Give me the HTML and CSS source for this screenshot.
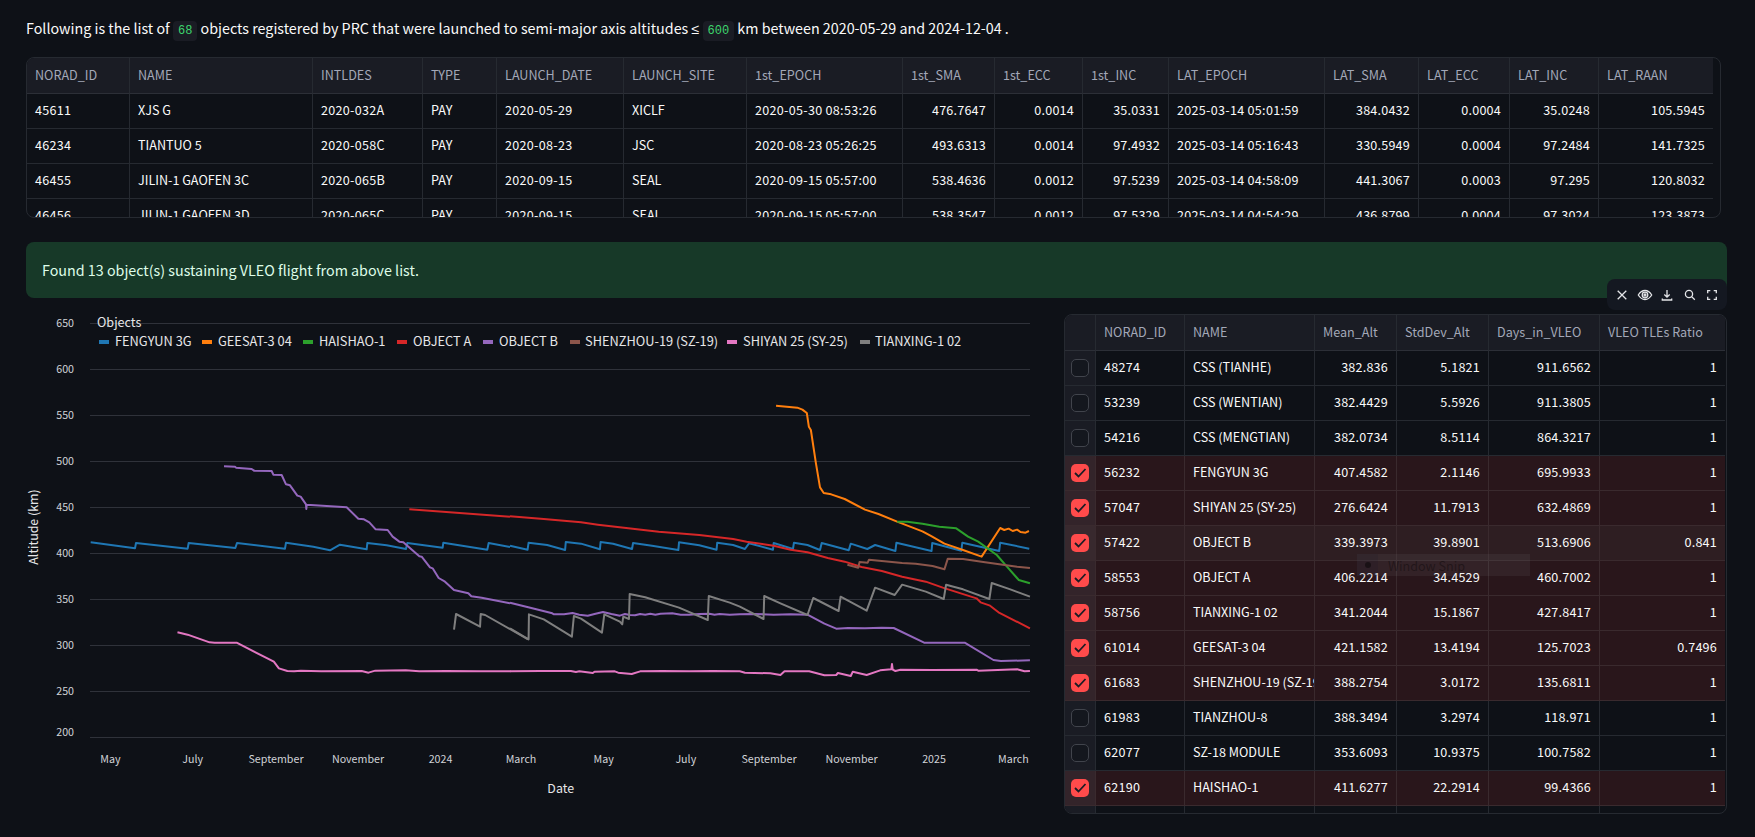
FILE: index.html
```html
<!DOCTYPE html>
<html lang="en">
<head>
<meta charset="utf-8">
<title>VLEO objects</title>
<link rel="stylesheet" href="styles.css">
</head>
<body>
<main class="page">
  <p class="intro">Following is the list of <code>68</code> objects registered by PRC that were launched to semi-major axis altitudes <span class="sym">≤</span> <code>600</code> km between 2020-05-29 and 2024-12-04 .</p>

  <div class="grid grid-top">
    <table class="dt dt-top">
      <colgroup>
        <col class="w103"><col class="w183"><col class="w110"><col class="w74"><col class="w127"><col class="w123"><col class="w156"><col class="w92"><col class="w88"><col class="w86"><col class="w156"><col class="w94"><col class="w91"><col class="w89"><col class="w114">
      </colgroup>
      <thead><tr><th>NORAD_ID</th><th>NAME</th><th>INTLDES</th><th>TYPE</th><th>LAUNCH_DATE</th><th>LAUNCH_SITE</th><th>1st_EPOCH</th><th>1st_SMA</th><th>1st_ECC</th><th>1st_INC</th><th>LAT_EPOCH</th><th>LAT_SMA</th><th>LAT_ECC</th><th>LAT_INC</th><th>LAT_RAAN</th></tr></thead>
      <tbody>
        <tr><td class="d">45611</td><td>XJS G</td><td class="d">2020-032A</td><td>PAY</td><td class="d">2020-05-29</td><td>XICLF</td><td class="d">2020-05-30 08:53:26</td><td class="n">476.7647</td><td class="n">0.0014</td><td class="n">35.0331</td><td class="d">2025-03-14 05:01:59</td><td class="n">384.0432</td><td class="n">0.0004</td><td class="n">35.0248</td><td class="n">105.5945</td></tr>
        <tr><td class="d">46234</td><td>TIANTUO 5</td><td class="d">2020-058C</td><td>PAY</td><td class="d">2020-08-23</td><td>JSC</td><td class="d">2020-08-23 05:26:25</td><td class="n">493.6313</td><td class="n">0.0014</td><td class="n">97.4932</td><td class="d">2025-03-14 05:16:43</td><td class="n">330.5949</td><td class="n">0.0004</td><td class="n">97.2484</td><td class="n">141.7325</td></tr>
        <tr><td class="d">46455</td><td>JILIN-1 GAOFEN 3C</td><td class="d">2020-065B</td><td>PAY</td><td class="d">2020-09-15</td><td>SEAL</td><td class="d">2020-09-15 05:57:00</td><td class="n">538.4636</td><td class="n">0.0012</td><td class="n">97.5239</td><td class="d">2025-03-14 04:58:09</td><td class="n">441.3067</td><td class="n">0.0003</td><td class="n">97.295</td><td class="n">120.8032</td></tr>
        <tr><td class="d">46456</td><td>JILIN-1 GAOFEN 3D</td><td class="d">2020-065C</td><td>PAY</td><td class="d">2020-09-15</td><td>SEAL</td><td class="d">2020-09-15 05:57:00</td><td class="n">538.3547</td><td class="n">0.0012</td><td class="n">97.5329</td><td class="d">2025-03-14 04:54:29</td><td class="n">436.8799</td><td class="n">0.0004</td><td class="n">97.3024</td><td class="n">123.3873</td></tr>
      </tbody>
    </table>
  </div>

  <div class="alert">Found 13 object(s) sustaining VLEO flight from above list.</div>

  <section class="split">
    <svg class="chart" viewBox="26 298 1010 530" width="1010" height="530" role="img" aria-label="Altitude by date">
      <g class="gridlines">
        <line x1="90" x2="1030" y1="323.5" y2="323.5"/>
        <line x1="90" x2="1030" y1="369.5" y2="369.5"/>
        <line x1="90" x2="1030" y1="415.5" y2="415.5"/>
        <line x1="90" x2="1030" y1="461.5" y2="461.5"/>
        <line x1="90" x2="1030" y1="507.5" y2="507.5"/>
        <line x1="90" x2="1030" y1="553.5" y2="553.5"/>
        <line x1="90" x2="1030" y1="599.5" y2="599.5"/>
        <line x1="90" x2="1030" y1="645.5" y2="645.5"/>
        <line x1="90" x2="1030" y1="691.5" y2="691.5"/>
        <line x1="90" x2="1030" y1="737.5" y2="737.5"/>
      </g>
      <g class="ticks ticks-y">
        <text x="74" y="327">650</text><text x="74" y="373">600</text><text x="74" y="419">550</text><text x="74" y="465">500</text><text x="74" y="511">450</text><text x="74" y="557">400</text><text x="74" y="603">350</text><text x="74" y="649">300</text><text x="74" y="695">250</text><text x="74" y="736">200</text>
      </g>
      <g class="ticks ticks-x">
        <text x="110.5" y="763">May</text><text x="192.7" y="763">July</text><text x="276" y="763">September</text><text x="358" y="763">November</text><text x="440.5" y="763">2024</text><text x="521" y="763">March</text><text x="603.6" y="763">May</text><text x="685.8" y="763">July</text><text x="769" y="763">September</text><text x="851.5" y="763">November</text><text x="934" y="763">2025</text><text x="1013.4" y="763">March</text>
      </g>
      <text class="axis-title" x="560.7" y="792.5">Date</text>
      <text class="axis-title" transform="translate(38 527) rotate(-90)">Altitude (km)</text>

      <!-- series traced from the left part of the plot -->
      <g transform="translate(0 300) scale(.33333)">
        <polyline class="s blue" points="272,727 405,745 408,729 563,746 566,729 706,744 711,729 855,746 858,728 940,740 990,751 1020,734 1100,748 1102,729 1160,736 1218,747 1222,729 1328,743 1330,728 1462,749 1466,729 1530,741"/>
        <polyline class="s purple" points="672,499 705,500 708,503 755,507 762,512 815,513 820,524 845,525 858,553 870,556 892,587 902,590 918,613 919,627 920,614 1040,622 1075,656 1092,658 1108,667 1127,688 1163,690 1178,710 1198,725 1210,727 1258,769 1265,770 1290,802 1298,805 1316,834 1335,845 1362,870 1405,880 1414,889 1445,893 1530,910"/>
        <polyline class="s red" points="1228,628 1530,650"/>
      </g>
      <g transform="translate(0 600) scale(.33806 .33333)">
        <polyline class="s gray" points="1343,89 1349,42 1420,80 1422,42 1435,45 1562,118"/>
        <polyline class="s pink" points="525,97 555,104 620,127 635,128 700,128 810,185 825,205 850,213 870,214 890,212 950,214 1070,213 1090,218 1110,212 1200,211 1240,214 1320,213 1420,214 1510,214"/>
      </g>
      <!-- series traced from the right part of the plot -->
      <g transform="translate(510 380) scale(.33806 .33333)">
        <polyline class="s blue" points="0,497 52,509 55,488 110,495 163,510 165,486 210,491 266,508 268,486 305,491 361,507 364,489 420,497 498,510 500,487 560,496 611,509 613,488 660,495 695,507 707,490 778,509 780,489 837,507 840,488 880,495 917,510 922,489 1002,511 1008,491 1057,507 1080,495 1140,513 1143,488 1247,513 1249,489 1335,512 1338,488 1447,513 1450,488 1536,506"/>
        <polyline class="s purple" points="0,668 60,683 125,700 130,703 160,703 185,699 205,704 230,707 250,702 275,696 300,702 325,707 340,702 355,705 370,706 385,702 400,704 415,701 430,704 445,701 480,700 505,704 530,704 560,702 590,701 605,704 620,702 650,704 680,703 720,702 780,704 830,703 880,704 930,731 965,746 1000,744 1050,745 1100,743 1135,744 1225,788 1345,788 1430,840 1452,843 1538,841"/>
        <polyline class="s red" points="0,409 100,417 210,427 260,434 350,445 440,455 560,465 660,477 700,485 780,497 830,509 880,517 940,534 990,545 1040,561 1100,573 1160,590 1230,605 1280,623 1380,655 1392,667 1420,677 1445,697 1538,745"/>
        <polyline class="s orange" points="787,77 850,83 865,89 878,99 884,140 890,150 905,250 917,322 928,339 950,343 990,357 1050,389 1090,402 1145,425 1220,454 1245,468 1285,491 1340,510 1395,530 1450,444 1462,450 1475,446 1487,453 1500,449 1510,456 1525,458 1535,453"/>
        <polyline class="s green" points="1145,425 1175,425 1220,431 1270,440 1320,445 1355,470 1385,485 1440,525 1470,560 1505,600 1538,610"/>
        <polyline class="s brown" points="998,554 1030,563 1034,546 1058,548 1062,539 1130,546 1160,549 1200,551 1250,558 1285,568 1295,536 1340,537 1400,546 1500,560 1538,564"/>
        <polyline class="s gray" points="0,745 55,778 56,703 100,718 183,770 189,708 210,716 272,758 279,703 325,725 332,733 335,710 352,717 354,642 400,652 500,683 585,720 588,648 650,668 680,680 750,717 752,648 800,670 880,705 897,654 972,693 978,650 1055,692 1080,623 1138,645 1160,614 1230,635 1283,657 1290,614 1340,628 1418,657 1425,609 1480,628 1538,650"/>
      </g>
      <g transform="translate(510 600) scale(.33806 .33333)">
        <polyline class="s pink" points="0,214 90,213 180,213 195,216 205,214 245,219 250,215 310,214 320,218 360,222 385,214 450,213 530,214 600,213 680,214 695,218 770,220 800,225 812,214 885,214 930,226 965,225 970,219 1008,228 1014,215 1055,225 1095,211 1128,208 1130,192 1132,209 1140,213 1155,209 1250,210 1380,209 1385,212 1500,208 1522,214 1538,213"/>
      </g>

      <text class="legend-title" x="97" y="327">Objects</text>
      <g class="legend">
        <line class="swatch blue" x1="99" x2="109" y1="342" y2="342"/><text x="115" y="346">FENGYUN 3G</text>
        <line class="swatch orange" x1="202" x2="212" y1="342" y2="342"/><text x="218" y="346">GEESAT-3 04</text>
        <line class="swatch green" x1="303" x2="313" y1="342" y2="342"/><text x="319" y="346">HAISHAO-1</text>
        <line class="swatch red" x1="397" x2="407" y1="342" y2="342"/><text x="413" y="346">OBJECT A</text>
        <line class="swatch purple" x1="483" x2="493" y1="342" y2="342"/><text x="499" y="346">OBJECT B</text>
        <line class="swatch brown" x1="570" x2="580" y1="342" y2="342"/><text x="585" y="346">SHENZHOU-19 (SZ-19)</text>
        <line class="swatch pink" x1="727" x2="737" y1="342" y2="342"/><text x="743" y="346">SHIYAN 25 (SY-25)</text>
        <line class="swatch gray" x1="860" x2="870" y1="342" y2="342"/><text x="875" y="346">TIANXING-1 02</text>
      </g>
    </svg>

    <div class="side">
      <div class="toolbar">
        <svg viewBox="0 0 16 16"><path d="M3.700 3.700l8.600 8.600M12.300 3.700l-8.600 8.600"/></svg>
        <svg viewBox="0 0 16 16"><path d="M1.300 8c1.800-3 4-4.500 6.700-4.500S12.900 5 14.700 8c-1.800 3-4 4.500-6.700 4.500S3.100 11 1.300 8z"/><circle cx="8" cy="8" r="2.800"/><circle cx="8" cy="8" r="1"/></svg>
        <svg viewBox="0 0 16 16"><path d="M8 3v7M5.300 7.500L8 10.200l2.700-2.700M3.300 11.500v1.500h9.400v-1.500"/></svg>
        <svg viewBox="0 0 16 16"><circle cx="7" cy="7" r="3.600"/><path d="M9.600 9.600l3.200 3.200"/></svg>
        <svg viewBox="0 0 16 16"><path d="M3.700 6.300V3.700h2.600M9.700 3.700h2.600v2.600M12.300 9.700v2.600H9.700M6.300 12.300H3.700V9.700"/></svg>
      </div>
      <div class="grid grid-side">
        <table class="dt dt-side">
          <colgroup><col class="w31"><col class="w89"><col class="w130"><col class="w82"><col class="w92"><col class="w111"><col class="w125"></colgroup>
          <thead><tr><th></th><th>NORAD_ID</th><th>NAME</th><th>Mean_Alt</th><th>StdDev_Alt</th><th>Days_in_VLEO</th><th>VLEO TLEs Ratio</th></tr></thead>
          <tbody>
            <tr><td class="c"><span class="box"></span></td><td class="d">48274</td><td>CSS (TIANHE)</td><td class="n">382.836</td><td class="n">5.1821</td><td class="n">911.6562</td><td class="n">1</td></tr>
            <tr><td class="c"><span class="box"></span></td><td class="d">53239</td><td>CSS (WENTIAN)</td><td class="n">382.4429</td><td class="n">5.5926</td><td class="n">911.3805</td><td class="n">1</td></tr>
            <tr><td class="c"><span class="box"></span></td><td class="d">54216</td><td>CSS (MENGTIAN)</td><td class="n">382.0734</td><td class="n">8.5114</td><td class="n">864.3217</td><td class="n">1</td></tr>
            <tr class="sel"><td class="c"><span class="box on"><svg viewBox="0 0 18 18"><path d="M4 9l3.500 3.500L14.500 5"/></svg></span></td><td class="d">56232</td><td>FENGYUN 3G</td><td class="n">407.4582</td><td class="n">2.1146</td><td class="n">695.9933</td><td class="n">1</td></tr>
            <tr class="sel"><td class="c"><span class="box on"><svg viewBox="0 0 18 18"><path d="M4 9l3.500 3.500L14.500 5"/></svg></span></td><td class="d">57047</td><td>SHIYAN 25 (SY-25)</td><td class="n">276.6424</td><td class="n">11.7913</td><td class="n">632.4869</td><td class="n">1</td></tr>
            <tr class="sel hov"><td class="c"><span class="box on"><svg viewBox="0 0 18 18"><path d="M4 9l3.500 3.500L14.500 5"/></svg></span></td><td class="d">57422</td><td>OBJECT B</td><td class="n">339.3973</td><td class="n">39.8901</td><td class="n">513.6906</td><td class="n">0.841</td></tr>
            <tr class="sel"><td class="c"><span class="box on"><svg viewBox="0 0 18 18"><path d="M4 9l3.500 3.500L14.500 5"/></svg></span></td><td class="d">58553</td><td>OBJECT A</td><td class="n">406.2214</td><td class="n">34.4529</td><td class="n">460.7002</td><td class="n">1</td></tr>
            <tr class="sel"><td class="c"><span class="box on"><svg viewBox="0 0 18 18"><path d="M4 9l3.500 3.500L14.500 5"/></svg></span></td><td class="d">58756</td><td>TIANXING-1 02</td><td class="n">341.2044</td><td class="n">15.1867</td><td class="n">427.8417</td><td class="n">1</td></tr>
            <tr class="sel"><td class="c"><span class="box on"><svg viewBox="0 0 18 18"><path d="M4 9l3.500 3.500L14.500 5"/></svg></span></td><td class="d">61014</td><td>GEESAT-3 04</td><td class="n">421.1582</td><td class="n">13.4194</td><td class="n">125.7023</td><td class="n">0.7496</td></tr>
            <tr class="sel"><td class="c"><span class="box on"><svg viewBox="0 0 18 18"><path d="M4 9l3.500 3.500L14.500 5"/></svg></span></td><td class="d">61683</td><td>SHENZHOU-19 (SZ-19)</td><td class="n">388.2754</td><td class="n">3.0172</td><td class="n">135.6811</td><td class="n">1</td></tr>
            <tr><td class="c"><span class="box"></span></td><td class="d">61983</td><td>TIANZHOU-8</td><td class="n">388.3494</td><td class="n">3.2974</td><td class="n">118.971</td><td class="n">1</td></tr>
            <tr><td class="c"><span class="box"></span></td><td class="d">62077</td><td>SZ-18 MODULE</td><td class="n">353.6093</td><td class="n">10.9375</td><td class="n">100.7582</td><td class="n">1</td></tr>
            <tr class="sel"><td class="c"><span class="box on"><svg viewBox="0 0 18 18"><path d="M4 9l3.500 3.500L14.500 5"/></svg></span></td><td class="d">62190</td><td>HAISHAO-1</td><td class="n">411.6277</td><td class="n">22.2914</td><td class="n">99.4366</td><td class="n">1</td></tr>
            <tr><td class="c"></td><td></td><td></td><td></td><td></td><td></td><td></td></tr>
          </tbody>
        </table>
      </div>
      <div class="snip"><span class="snip-dot"><i></i></span><span class="snip-label">Window Snip</span></div>
    </div>
  </section>
</main>
</body>
</html>
```

FILE: styles.css
```css
* { box-sizing: border-box; }

html, body {
  margin: 0;
  height: 100%;
  background: #0e1117;
  overflow: hidden;
}

body {
  color: #fafafa;
  font-family: "Noto Sans CJK SC", "Noto Sans", sans-serif;
  font-size: 14.3px;
}

.page {
  padding: 16px 28px 0 26px;
}

.intro {
  margin: 0 0 17px;
  height: 24px;
  line-height: 24px;
  white-space: nowrap;
}

.sym {
  font-family: "Noto Sans", sans-serif;
}

code {
  font-family: "Liberation Mono", "DejaVu Sans Mono", monospace;
  font-size: 12px;
  color: #3dd56d;
  background: #1a1c24;
  border-radius: 4px;
  padding: 3px 5px;
}

.grid {
  border: 1px solid #262a31;
  border-radius: 8px;
  overflow: hidden;
}

.grid-top {
  width: 1695px;
  height: 161px;
}

.grid-side {
  width: 663px;
  height: 500px;
}

.dt {
  border-collapse: separate;
  border-spacing: 0;
  table-layout: fixed;
  font-size: 12.6px;
  line-height: 20px;
}

.dt-top { width: 1686px; }
.dt-side { width: 660px; }

.dt th,
.dt td {
  height: 35px;
  padding: 0 8px 2px;
  border-right: 1px solid #262a31;
  border-bottom: 1px solid #262a31;
  white-space: nowrap;
  overflow: hidden;
  text-align: left;
  font-weight: 400;
}

.dt th {
  height: 36px;
  background: #1a1c24;
  color: #a3a8b8;
  border-bottom-color: #2c2f37;
}

.dt td.n {
  text-align: right;
  letter-spacing: 0.2px;
}

.dt td.d { letter-spacing: 0.28px; }

.dt tr > :last-child { border-right: 0; }

.dt td.c {
  background: #1a1c24;
  padding: 0;
}

.dt .sel td {
  background: #29161b;
  border-color: #3a2a2e;
}

.dt .sel td.c { background: #33242a; }
.dt .hov td { background: #2e1e22; }
.dt .hov td.c { background: #38292e; }

.w31 { width: 31px; }
.w74 { width: 74px; }
.w82 { width: 82px; }
.w86 { width: 86px; }
.w88 { width: 88px; }
.w89 { width: 89px; }
.w91 { width: 91px; }
.w92 { width: 92px; }
.w94 { width: 94px; }
.w103 { width: 103px; }
.w110 { width: 110px; }
.w111 { width: 111px; }
.w114 { width: 114px; }
.w123 { width: 123px; }
.w125 { width: 125px; }
.w127 { width: 127px; }
.w130 { width: 130px; }
.w156 { width: 156px; }
.w183 { width: 183px; }

.box {
  display: block;
  width: 18px;
  height: 18px;
  margin: 0 0 0 6px;
  border: 1px solid #41444c;
  border-radius: 5px;
  background: #14171e;
}

.box.on {
  border: 0;
  background: #ff4b4b;
}

.box svg {
  display: block;
  width: 18px;
  height: 18px;
}

.box path {
  fill: none;
  stroke: #1a1c24;
  stroke-width: 1.800;
}

.alert {
  margin-top: 24px;
  width: 1701px;
  height: 56px;
  padding: 16px;
  line-height: 24px;
  border-radius: 8px;
  background: #173928;
  color: #dffde9;
}

.split {
  display: flex;
  align-items: flex-start;
  gap: 28px;
}

.chart {
  display: block;
  flex: none;
  font-family: "Noto Sans CJK SC", "Noto Sans", sans-serif;
}

.side {
  position: relative;
  flex: none;
  padding-top: 16px;
}

.toolbar {
  position: absolute;
  top: -19px;
  right: 0;
  width: 120px;
  height: 31px;
  display: flex;
  align-items: center;
  justify-content: space-between;
  padding: 0 7px;
  border-radius: 8px;
  background: #141821;
}

.toolbar svg {
  width: 16px;
  height: 16px;
  fill: none;
  stroke: #e4e5e8;
  stroke-width: 1.300;
}

.snip {
  position: absolute;
  left: 293px;
  top: 256px;
  width: 173px;
  height: 22px;
  display: flex;
  align-items: center;
  background: rgba(150, 150, 170, 0.09);
  font-size: 12.6px;
  color: rgba(0, 0, 0, 0.35);
}

.snip-dot {
  width: 21px;
  height: 22px;
  display: flex;
  align-items: center;
  justify-content: center;
  background: rgba(20, 20, 40, 0.12);
}

.snip-dot i {
  width: 6px;
  height: 6px;
  border-radius: 50%;
  background: rgba(0, 0, 0, 0.45);
}

.snip-label { margin-left: 10px; }

.gridlines line { stroke: #2f323a; stroke-width: 1; }

.ticks text {
  font-size: 10.7px;
  fill: #d1d3d8;
}

.ticks-y text { text-anchor: end; }
.ticks-x text { text-anchor: middle; }

.axis-title {
  font-size: 12.4px;
  fill: #e6e6e8;
  text-anchor: middle;
}

.legend-title {
  font-size: 12.6px;
  fill: #e6e6e8;
}

.legend text {
  font-size: 12.8px;
  fill: #e6e6e8;
}

.s {
  fill: none;
  stroke-width: 2;
  stroke-linejoin: round;
  vector-effect: non-scaling-stroke;
}

.swatch { stroke-width: 4; }

.blue { stroke: #1f77b4; }
.orange { stroke: #ff7f0e; }
.green { stroke: #2ca02c; }
.red { stroke: #d62728; }
.purple { stroke: #9467bd; }
.brown { stroke: #8c564b; }
.pink { stroke: #e377c2; }
.gray { stroke: #7f7f7f; }
```
